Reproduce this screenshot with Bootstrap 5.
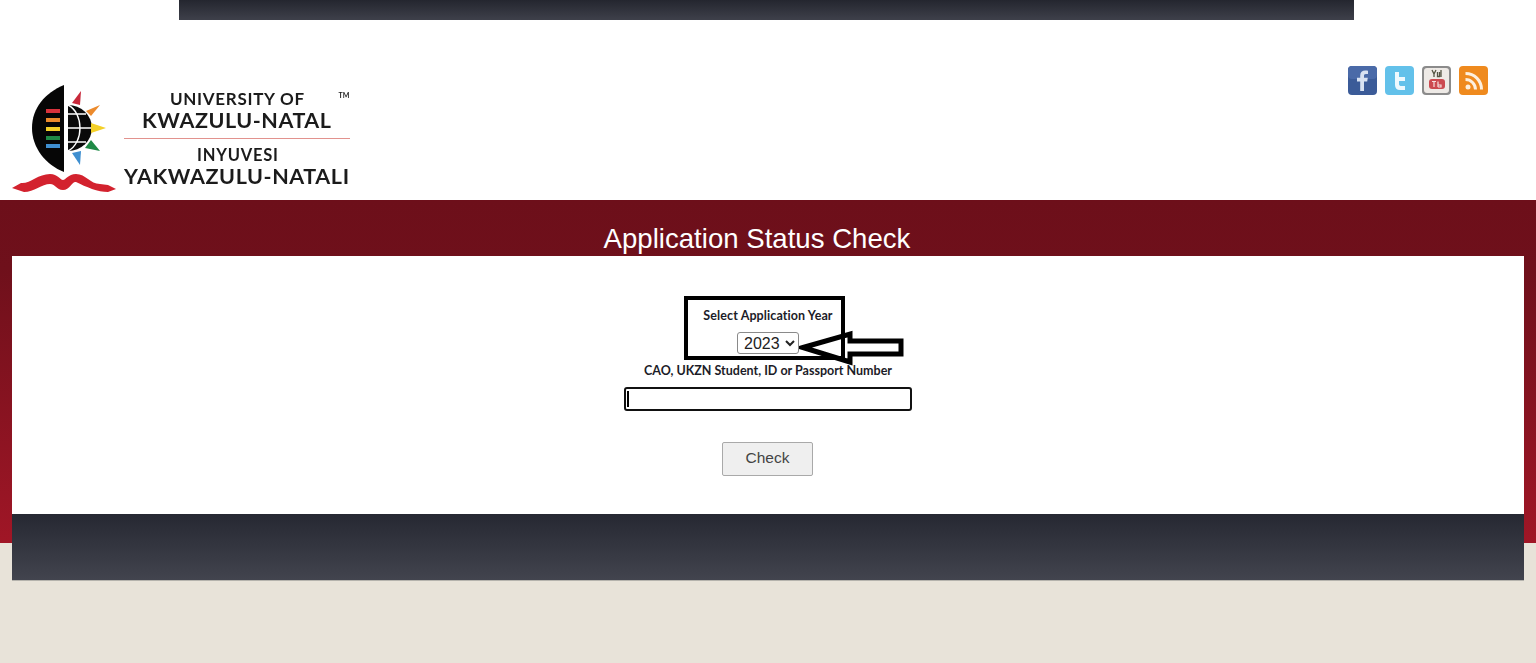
<!DOCTYPE html>
<html lang="en">
<head>
    <meta charset="UTF-8">
    <meta name="viewport" content="width=device-width, initial-scale=1.0">
    <title>Application Status Check</title>
    <link rel="stylesheet" href="https://cdn.jsdelivr.net/npm/bootstrap@5.3.0/dist/css/bootstrap.min.css">
    <style>
        html, body { height: 100%; }
        body { background: #e8e3d9; font-family: "Liberation Sans", Arial, sans-serif; overflow: hidden; }
        .top-area { background: #fff; }
        .top-strip { height: 20px; margin: 0 182px 0 179px; background: linear-gradient(#24262f, #3e404a); }
        .site-head { height: 180px; background: #fff; padding: 46px 48px 8px 12px; }
        .logo-svg { display: block; align-self: flex-end; filter: blur(.4px); }
        .logo-svg text { font-family: "Lato", "Liberation Sans", sans-serif; fill: #1b1b1b; }
        .social { gap: 8px; filter: blur(.6px); }
        .social svg { display: block; width: 29px; height: 29px; }
        .red-band { height: 343px; background: linear-gradient(#6d0f1a, #6f101b 20%, #a01626); }
        .page-title { height: 56px; padding: 22px 22px 0 0; margin: 0; color: #fff; font-size: 27.6px; line-height: 33px; font-weight: 400; text-align: center; }
        .form-panel { margin: 0 12px; height: 258px; background: #fff; padding-top: 52px; }
        .form-wrap { width: 290px; margin: 0 auto; }
        .field-label { font-family: "Lato", "Liberation Sans", sans-serif; font-weight: 700; font-size: 12.5px; line-height: 16px; color: #1c1c28; margin: 0; }
        .year-label { letter-spacing: .1px; }
        .year-select { font-family: "Liberation Sans", sans-serif; font-size: 16px; height: 22px; width: 62px; padding: 0 0 0 2px; margin: 8px 0 9px; border: 1px solid #8a8a8a; border-radius: 3px; background: #fff; color: #222; }
        .id-input { display: block; width: 288px; height: 24px; margin: 8px auto 0; border: 2px solid #111; border-radius: 3px; outline: 0; padding: 2px; background: #fff; }
        .caret-mark { position: absolute; left: 4px; top: 4px; width: 2px; height: 16px; background: #000; }
        .check-btn { width: 91px; height: 34px; margin: 31px 1px 0 0; padding: 0 0 2px; border: 1px solid #a9a9a9; border-radius: 2px; background: #efefef; color: #444; font-size: 15.5px; }
        .mark-box { position: absolute; left: 61px; top: -12px; width: 161px; height: 64px; border: 4px solid #000; pointer-events: none; }
        .mark-arrow { position: absolute; left: 176px; top: 20px; pointer-events: none; }
        .site-foot { height: 67px; margin: -29px 12px 0; position: relative; background: linear-gradient(#262832, #42444e); border-bottom: 1px solid #b5b3ad; }
    </style>
</head>
<body>
    <div class="top-area"><div class="top-strip"></div></div>

    <header class="site-head d-flex justify-content-between align-items-start">
        <svg class="logo-svg" width="338" height="108" viewBox="12 84 338 108" role="img" aria-label="University of KwaZulu-Natal logo">
            <!-- shield -->
            <path d="M64 85C45 93 32 108 32 128C32 148 46 165 64 172Z" fill="#060606"/>
            <rect x="46" y="109" width="14" height="4" fill="#d8323c"/>
            <rect x="46" y="118" width="14" height="4" fill="#ec8a2c"/>
            <rect x="46" y="127" width="14" height="4" fill="#f4d028"/>
            <rect x="46" y="136" width="14" height="4" fill="#1f8a46"/>
            <rect x="46" y="144" width="14" height="4" fill="#3f8fd0"/>
            <!-- globe -->
            <path d="M68 105A24 23 0 0 1 68 151Z" fill="#0a0a0a"/>
            <g fill="none" stroke="#fff" stroke-width="1.4">
                <path d="M68 105C84 113 84 143 68 151"/>
                <path d="M68 114H86M68 128H92M68 142H86"/>
            </g>
            <!-- rays -->
            <path d="M81 91L72 103L80 105Z" fill="#c8283a"/>
            <path d="M100 105L86 111L91 116Z" fill="#ec8a2c"/>
            <path d="M106 128L91 123V133Z" fill="#f4d028"/>
            <path d="M100 151L91 140L85 148Z" fill="#1f8a46"/>
            <path d="M80 165L72 153L81 151Z" fill="#3f8fd0"/>
            <!-- ribbon -->
            <path d="M12 188L21 183C30 184 38 174 50 174C58 174 60 180 63 180C66 180 68 174 76 174C86 174 90 184 100 184L108 185L116 189L108 192C98 192 86 187 76 182C72 181 70 190 63 190C56 190 56 184 50 184C42 184 34 192 24 192Z" fill="#d3222e"/>
            <!-- wordmark -->
            <text x="170" y="105" font-size="17" font-weight="700" textLength="134" lengthAdjust="spacing">UNIVERSITY OF</text>
            <text x="142" y="127.500" font-size="21.500" font-weight="700" textLength="189" lengthAdjust="spacing">KWAZULU-NATAL</text>
            <text x="344" y="98" text-anchor="middle" font-size="7" font-weight="700">TM</text>
            <rect x="124" y="138" width="226" height="1" fill="#e2928e"/>
            <text x="197" y="161" font-size="16.500" font-weight="700" textLength="81" lengthAdjust="spacing">INYUVESI</text>
            <text x="124" y="183.500" font-size="21.500" font-weight="700" textLength="225" lengthAdjust="spacing">YAKWAZULU-NATALI</text>
        </svg>

        <div class="social d-flex">
            <svg viewBox="0 0 29 29"><rect width="29" height="29" rx="4" fill="#3b5b98"/><rect width="29" height="13" rx="4" fill="#4a6aa8"/><path d="M16 25V15.500H19.200L19.800 11.800H16V9.800C16 8.700 16.400 8 17.900 8H20V4.700C19.200 4.600 18.300 4.500 17.200 4.500C14.200 4.500 12.200 6.300 12.200 9.400V11.800H9V15.500H12.200V25Z" fill="#d8e2f2"/></svg>
            <svg viewBox="0 0 29 29"><rect width="29" height="29" rx="4" fill="#63c1ea"/><path d="M10 6H14V11H20V15H14V18C14 19.500 15 20 16.500 20H20V24H15C11.800 24 10 22 10 19Z" fill="#eef9fe"/></svg>
            <svg viewBox="0 0 29 29"><rect width="29" height="29" rx="4" fill="#8b8b8b"/><rect x="2" y="2" width="25" height="25" rx="3" fill="#eeeae6"/><path d="M10 4L12 8L14 4M12 8V11M15.500 6V10.500H17.500V6M19 4V11" fill="none" stroke="#554" stroke-width="1.300"/><rect x="7" y="13" width="16" height="10" rx="3" fill="#cc4a50"/><path d="M10 15.500H14M12 15.500V21M16 15.500V21M16 19H19V21H16" fill="none" stroke="#f6dede" stroke-width="1.200"/></svg>
            <svg viewBox="0 0 29 29"><rect width="29" height="29" rx="4" fill="#ef8a1e"/><circle cx="9" cy="21" r="2.500" fill="#fdf0df"/><path d="M6.500 13.500C12 13.500 16.500 18 16.500 23.500M6.500 7.500C15.500 7.500 22.500 14.500 22.500 23.500" fill="none" stroke="#fdf0df" stroke-width="3"/></svg>
        </div>
    </header>

    <main class="red-band">
        <h1 class="page-title">Application Status Check</h1>
        <div class="form-panel">
            <form class="form-wrap position-relative text-center">
                <p class="field-label year-label">Select Application Year</p>
                <select class="year-select">
                    <option>2023</option>
                    <option>2022</option>
                    <option>2021</option>
                </select>
                <p class="field-label">CAO, UKZN Student, ID or Passport Number</p>
                <div class="position-relative">
                    <input class="id-input" type="text" aria-label="Student number">
                    <span class="caret-mark"></span>
                </div>
                <button class="check-btn" type="button">Check</button>

                <div class="mark-box"></div>
                <svg class="mark-arrow" width="106" height="40" viewBox="0 0 106 40">
                    <path d="M4 19.500L51 6V13H102V26H51V34Z" fill="none" stroke="#000" stroke-width="5"/>
                </svg>
            </form>
        </div>
    </main>

    <footer class="site-foot"></footer>
</body>
</html>
